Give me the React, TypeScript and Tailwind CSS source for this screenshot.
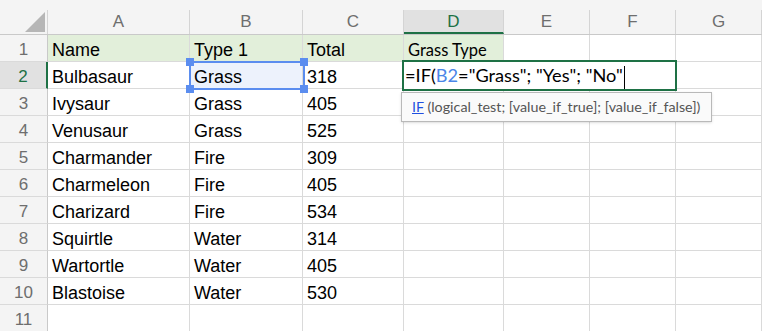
const cols = [
  { key: "A", w: "w-[142px]" },
  { key: "B", w: "w-[113px]" },
  { key: "C", w: "w-[101px]" },
  { key: "D", w: "w-[100px]" },
  { key: "E", w: "w-[86px]" },
  { key: "F", w: "w-[86px]" },
  { key: "G", w: "w-[86px]" },
];

const rows: string[][] = [
  ["Name", "Type 1", "Total", "Grass Type"],
  ["Bulbasaur", "Grass", "318", ""],
  ["Ivysaur", "Grass", "405", ""],
  ["Venusaur", "Grass", "525", ""],
  ["Charmander", "Fire", "309", ""],
  ["Charmeleon", "Fire", "405", ""],
  ["Charizard", "Fire", "534", ""],
  ["Squirtle", "Water", "314", ""],
  ["Wartortle", "Water", "405", ""],
  ["Blastoise", "Water", "530", ""],
  ["", "", "", ""],
];

const App = () => {
  return (
    <div className="relative w-[762px] h-[331px] overflow-hidden bg-white font-['Liberation_Sans',Arial,sans-serif]">
      {/* column headers */}
      <div className="flex h-[35px] items-end bg-[#f4f4f4] border-b border-[#c9c9c9]">
        <div className="relative w-[48px] h-[24px] shrink-0 border-r border-[#d4d4d4]">
          <svg className="absolute left-0 top-0" width="48" height="24" viewBox="0 0 48 24">
            <polygon points="25,22 45,22 45,2" fill="#b6b6b6" />
          </svg>
        </div>
        {cols.map((c) =>
          c.key === "D" ? (
            <div
              key={c.key}
              className={`${c.w} h-[24px] shrink-0 bg-[#e1e1e1] border-r border-[#d4d4d4] border-b-2 border-b-[#1e7145] text-center text-[17px] leading-[24px] text-[#1e7145]`}
            >
              {c.key}
            </div>
          ) : (
            <div
              key={c.key}
              className={`${c.w} h-[24px] shrink-0 border-r border-[#d4d4d4] text-center text-[17px] leading-[24px] text-[#6e6e6e]`}
            >
              {c.key}
            </div>
          )
        )}
      </div>

      {/* rows */}
      {rows.map((r, i) => (
        <div key={i} className="flex h-[27px]">
          <div
            className={`w-[48px] shrink-0 border-b border-[#dadada] text-center text-[17px] leading-[26px] pt-[2px] ${
              i === 1
                ? "bg-[#e1e1e1] text-[#1e7145] border-r-2 border-r-[#1e7145]"
                : "bg-[#f4f4f4] text-[#6e6e6e] border-r border-r-[#c9c9c9]"
            }`}
          >
            {i + 1}
          </div>
          {cols.map((c, j) => {
            const v = r[j] ?? "";
            const green = i === 0 && j < 4;
            const sel = i === 1 && j === 1;
            return (
              <div
                key={c.key}
                className={`${c.w} shrink-0 overflow-hidden whitespace-nowrap border-r border-b border-[#dadada] px-[4px] pt-[2px] leading-[26px] text-black ${
                  green ? "bg-[#e2efda]" : sel ? "bg-[#edf2fc]" : "bg-white"
                } ${j === 3 ? "font-['Lato',sans-serif] text-[16.5px]" : "text-[18px]"}`}
              >
                {v}
              </div>
            );
          })}
        </div>
      ))}

      {/* B2 selection */}
      <div className="absolute left-[189px] top-[61px] w-[116px] h-[29px] border-2 border-[#5b8def]">
        <div className="absolute -left-[5px] -top-[5px] w-[8px] h-[8px] bg-[#5b8def]" />
        <div className="absolute -left-[5px] -bottom-[5px] w-[8px] h-[8px] bg-[#5b8def]" />
        <div className="absolute -right-[5px] -top-[5px] w-[8px] h-[8px] bg-[#5b8def]" />
        <div className="absolute -right-[5px] -bottom-[5px] w-[8px] h-[8px] bg-[#5b8def]" />
      </div>

      {/* D2 edit box */}
      <div className="absolute left-[402px] top-[60px] w-[275px] h-[31px] border-[2.5px] border-[#1e7145] bg-white pl-[1px] font-['Lato',sans-serif] text-[18.2px] leading-[27px] text-black whitespace-nowrap">
        =IF(<span className="text-[#4a86e8]">B2</span>="Grass"; "Yes"; "No"
        <span className="inline-block w-px h-[23px] bg-black align-middle ml-[1px]" />
      </div>

      {/* function tooltip */}
      <div className="absolute left-[401px] top-[92px] w-[311px] h-[30px] border border-[#b9b9b9] bg-[#fafafa] pl-[10px] font-['Lato',sans-serif] text-[14.3px] leading-[28px] text-[#555555] whitespace-nowrap shadow-sm">
        <span className="text-[#1f4fe0] underline">IF</span> (logical_test; [value_if_true]; [value_if_false])
      </div>
    </div>
  );
};

export default App;
